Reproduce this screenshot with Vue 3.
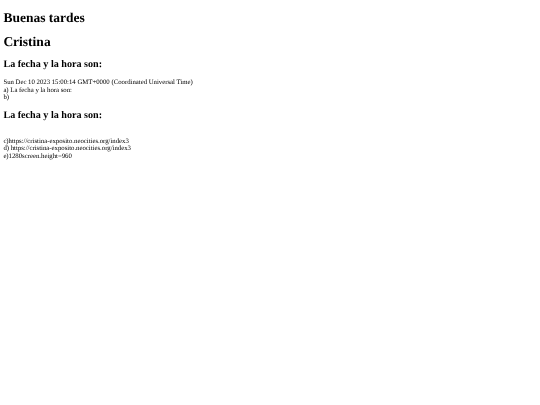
<script setup>
const greeting = 'Buenas tardes'
const user = 'Cristina'
const label = 'La fecha y la hora son:'
const lines = [
  'Sun Dec 10 2023 15:00:14 GMT+0000 (Coordinated Universal Time)',
  'a) La fecha y la hora son:',
  'b)',
]
const info = [
  'c)https://cristina-exposito.neocities.org/index3',
  'd) https://cristina-exposito.neocities.org/index3',
  'e)1280screen.height=960',
]
</script>

<template>
  <div class="frame">
    <main class="page">
      <h1>{{ greeting }}</h1>
      <h1>{{ user }}</h1>
      <h2>{{ label }}</h2>
      <div>
        <div v-for="line in lines" :key="line">{{ line }}</div>
      </div>
      <h2>{{ label }}</h2>
      <div class="info">
        <div v-for="line in info" :key="line">{{ line }}</div>
      </div>
    </main>
  </div>
</template>

<style>
html,
body {
  margin: 0;
  background: #fff;
}
</style>

<style scoped>
.frame {
  width: 540px;
  height: 405px;
  overflow: hidden;
}
/* the shot is a 1280x960 page scaled down to the window */
.page {
  display: flow-root;
  width: 1280px;
  height: 960px;
  padding: 1px 8px 0;
  box-sizing: border-box;
  transform: scale(0.421875);
  transform-origin: 0 0;
  text-rendering: geometricPrecision;
  filter: blur(0.2px);
  font-family: "Liberation Serif", "Times New Roman", serif;
  font-size: 16px;
  color: #000;
}
h1 {
  margin: 21.44px 0;
  font-size: 32px;
}
h2 {
  margin: 19.92px 0;
  font-size: 24px;
}
.info {
  padding-top: 18px;
}
</style>
